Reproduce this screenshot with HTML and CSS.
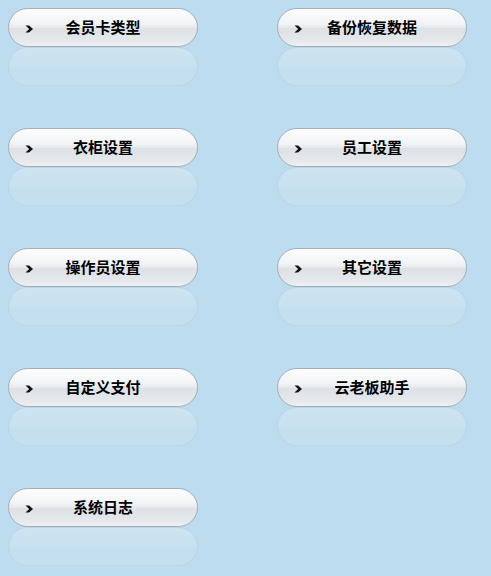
FILE: index.html
```html
<!DOCTYPE html>
<html>
<head>
<meta charset="utf-8">
<link rel="stylesheet" href="styles.css">
</head>
<body>
<div class="grid">
  <div class="item"><div class="btn"><svg class="arrow" viewBox="0 0 9 8"><path d="M0.5 0.5 L4 0.5 L8 4 L4 7.5 L0.5 7.5 L4.2 4 Z"/></svg><span>会员卡类型</span></div><div class="refl"></div></div>
  <div class="item"><div class="btn"><svg class="arrow" viewBox="0 0 9 8"><path d="M0.5 0.5 L4 0.5 L8 4 L4 7.5 L0.5 7.5 L4.2 4 Z"/></svg><span>备份恢复数据</span></div><div class="refl"></div></div>
  <div class="item"><div class="btn"><svg class="arrow" viewBox="0 0 9 8"><path d="M0.5 0.5 L4 0.5 L8 4 L4 7.5 L0.5 7.5 L4.2 4 Z"/></svg><span>衣柜设置</span></div><div class="refl"></div></div>
  <div class="item"><div class="btn"><svg class="arrow" viewBox="0 0 9 8"><path d="M0.5 0.5 L4 0.5 L8 4 L4 7.5 L0.5 7.5 L4.2 4 Z"/></svg><span>员工设置</span></div><div class="refl"></div></div>
  <div class="item"><div class="btn"><svg class="arrow" viewBox="0 0 9 8"><path d="M0.5 0.5 L4 0.5 L8 4 L4 7.5 L0.5 7.5 L4.2 4 Z"/></svg><span>操作员设置</span></div><div class="refl"></div></div>
  <div class="item"><div class="btn"><svg class="arrow" viewBox="0 0 9 8"><path d="M0.5 0.5 L4 0.5 L8 4 L4 7.5 L0.5 7.5 L4.2 4 Z"/></svg><span>其它设置</span></div><div class="refl"></div></div>
  <div class="item"><div class="btn"><svg class="arrow" viewBox="0 0 9 8"><path d="M0.5 0.5 L4 0.5 L8 4 L4 7.5 L0.5 7.5 L4.2 4 Z"/></svg><span>自定义支付</span></div><div class="refl"></div></div>
  <div class="item"><div class="btn"><svg class="arrow" viewBox="0 0 9 8"><path d="M0.5 0.5 L4 0.5 L8 4 L4 7.5 L0.5 7.5 L4.2 4 Z"/></svg><span>云老板助手</span></div><div class="refl"></div></div>
  <div class="item"><div class="btn"><svg class="arrow" viewBox="0 0 9 8"><path d="M0.5 0.5 L4 0.5 L8 4 L4 7.5 L0.5 7.5 L4.2 4 Z"/></svg><span>系统日志</span></div><div class="refl"></div></div>
</div>
</body>
</html>
```
FILE: styles.css
```css
html, body {
  margin: 0;
  padding: 0;
  background: #bddcef;
  height: 100%;
  overflow: hidden;
}
.grid {
  display: grid;
  grid-template-columns: 190px 190px;
  column-gap: 79px;
  row-gap: 42px;
  padding: 8px 0 0 8px;
}
.item {
  display: flex;
  flex-direction: column;
}
.btn {
  position: relative;
  box-sizing: border-box;
  height: 39px;
  border: 1px solid #a3afb8;
  border-radius: 20px;
  background: linear-gradient(to bottom, #fdfdfe 0%, #f1f3f5 40%, #e6e9ec 50%, #dde1e5 52%, #e4e7ea 80%, #eef0f2 100%);
  display: flex;
  align-items: center;
  justify-content: center;
  font-family: "Noto Sans CJK SC", sans-serif;
  font-weight: bold;
  font-size: 15px;
  line-height: 15px;
  color: #000;
}
.btn span {
  margin-top: -2px;
}
.arrow {
  position: absolute;
  left: 16px;
  top: 16px;
  width: 9px;
  height: 8px;
  fill: #111;
}
.refl {
  box-sizing: border-box;
  height: 39px;
  border: 1px solid #b8d6e8;
  border-radius: 20px;
  background: linear-gradient(to bottom, #cde4f1 0%, #c8e1f0 50%, #c3dfef 55%, #c5dfee 100%);
}
```
